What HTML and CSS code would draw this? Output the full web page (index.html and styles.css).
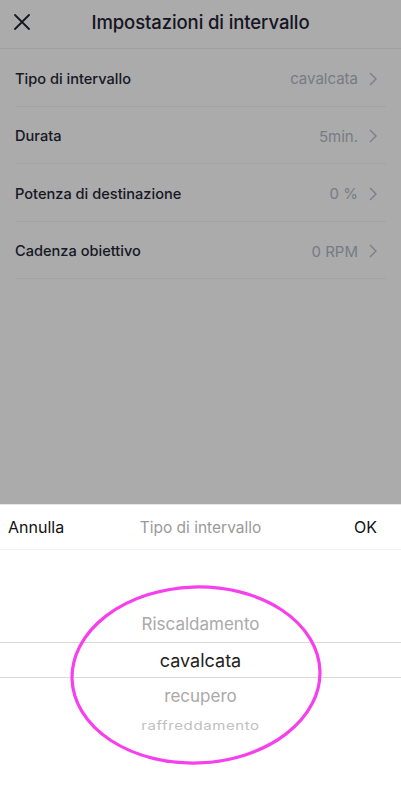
FILE: index.html
```html
<!DOCTYPE html>
<html lang="it">
<head>
<meta charset="utf-8">
<title>Impostazioni di intervallo</title>
<link rel="stylesheet" href="styles.css">
</head>
<body>
<div class="page">
  <header class="topbar">
    <svg class="close" width="16" height="16" viewBox="0 0 16 16"><path d="M1 1 L15 15 M15 1 L1 15" stroke="#1f2233" stroke-width="1.8" fill="none" stroke-linecap="round"/></svg>
    <h1 class="title">Impostazioni di intervallo</h1>
  </header>
  <ul class="list">
    <li class="row"><span class="label">Tipo di intervallo</span><span class="value">cavalcata</span><svg class="chev" width="8" height="14" viewBox="0 0 8 14"><path d="M1 1 L7 7 L1 13" stroke="#b8bdcb" stroke-width="1.4" fill="none"/></svg></li>
    <li class="row"><span class="label">Durata</span><span class="value">5min.</span><svg class="chev" width="8" height="14" viewBox="0 0 8 14"><path d="M1 1 L7 7 L1 13" stroke="#b8bdcb" stroke-width="1.4" fill="none"/></svg></li>
    <li class="row"><span class="label">Potenza di destinazione</span><span class="value">0 %</span><svg class="chev" width="8" height="14" viewBox="0 0 8 14"><path d="M1 1 L7 7 L1 13" stroke="#b8bdcb" stroke-width="1.4" fill="none"/></svg></li>
    <li class="row"><span class="label">Cadenza obiettivo</span><span class="value">0 RPM</span><svg class="chev" width="8" height="14" viewBox="0 0 8 14"><path d="M1 1 L7 7 L1 13" stroke="#b8bdcb" stroke-width="1.4" fill="none"/></svg></li>
  </ul>
</div>
<div class="scrim"></div>
<section class="sheet">
  <div class="sheet-head">
    <span class="cancel">Annulla</span>
    <span class="sheet-title">Tipo di intervallo</span>
    <span class="ok">OK</span>
  </div>
  <div class="picker">
    <div class="opt opt-near">Riscaldamento</div>
    <div class="opt opt-sel">cavalcata</div>
    <div class="opt opt-near">recupero</div>
    <div class="opt opt-far">raffreddamento</div>
  </div>
  <svg class="mark" width="260" height="186" viewBox="0 0 260 186"><ellipse cx="130" cy="93" rx="124" ry="88" fill="none" stroke="#f640ee" stroke-width="3.2" transform="rotate(-2 130 93)"/></svg>
</section>
</body>
</html>
```
FILE: styles.css
```css
* { box-sizing: border-box; }
html, body { margin: 0; padding: 0; }
body {
  width: 401px;
  height: 800px;
  overflow: hidden;
  background: #fff;
  font-family: Inter, "Liberation Sans", Arial, sans-serif;
  position: relative;
}
.page { background: #fff; height: 800px; }
.topbar {
  height: 49px;
  display: flex;
  align-items: center;
  position: relative;
  border-bottom: 1px solid #efefef;
  padding-left: 14px;
  padding-bottom: 4px;
}
.close { display: block; }
.title {
  margin: 0;
  position: absolute;
  left: 0; right: 0;
  text-align: center;
  font-size: 18.5px;
  font-weight: 500;
  color: #1f2233;
  letter-spacing: -0.1px;
}
.list { list-style: none; margin: 0; padding: 0 15px; }
.row {
  height: 57.5px;
  display: flex;
  align-items: center;
  padding-top: 3px;
  border-bottom: 1px solid #f3f3f5;
}
.label { flex: 1; font-size: 14.6px; font-weight: 500; color: #232636; }
.value { font-size: 15px; color: #b3b8c7; margin-right: 11px; }
.chev { margin-right: 9px; }
.scrim {
  position: absolute;
  inset: 0;
  background: rgba(0,0,0,0.33);
}
.sheet {
  position: absolute;
  left: 0; right: 0; bottom: 0;
  height: 296px;
  background: #fff;
  border-top: 1px solid #e6e6e6;
}
.sheet-head {
  height: 45px;
  display: flex;
  align-items: center;
  justify-content: space-between;
  padding: 0 24px 0 8px;
  border-bottom: 1px solid #f2f2f2;
  position: relative;
  font-size: 16px;
  color: #111;
}
.sheet-title {
  position: absolute;
  left: 0; right: 0;
  text-align: center;
  color: #9a9a9a;
  font-size: 15.5px;
}
.picker {
  padding-top: 56px;
  display: flex;
  flex-direction: column;
  align-items: center;
}
.opt {
  width: 100%;
  height: 36px;
  display: flex;
  align-items: center;
  justify-content: center;
  font-size: 17px;
}
.opt-near { color: #a9a9a9; }
.opt-sel {
  color: #222;
  font-size: 18px;
  border-top: 1px solid #d9d9d9;
  border-bottom: 1px solid #d9d9d9;
}
.opt-far {
  height: 22px;
  color: #c0c0c0;
  font-size: 15px;
  letter-spacing: 0.6px;
  transform: scaleY(0.82);
}
.mark {
  position: absolute;
  left: 66px;
  top: 77px;
}
```
